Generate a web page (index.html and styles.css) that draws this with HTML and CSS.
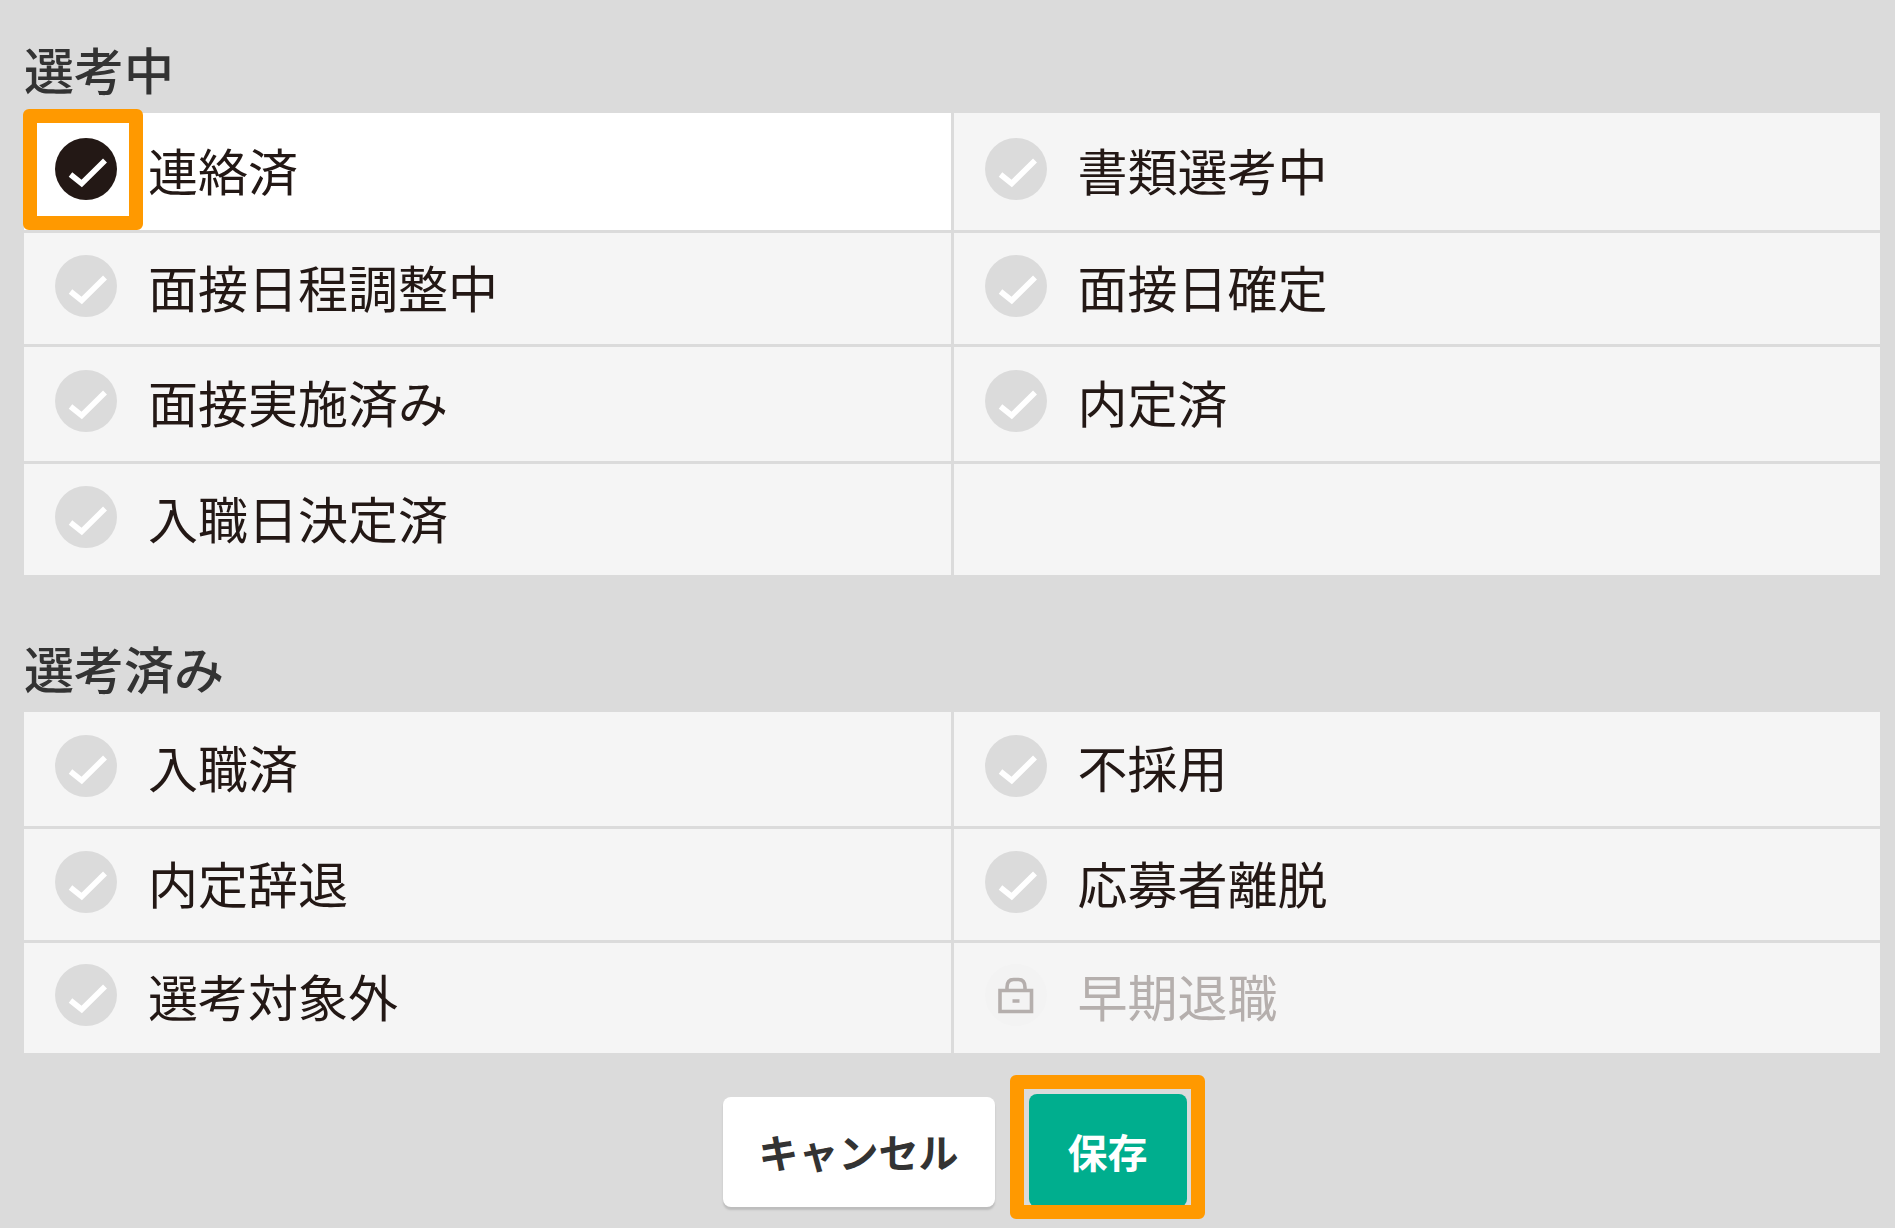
FILE: index.html
```html
<!DOCTYPE html>
<html lang="ja">
<head>
<meta charset="utf-8">
<meta name="viewport" content="width=device-width, initial-scale=1">
<title>選考ステータス</title>
<link rel="stylesheet" href="styles.css">
</head>
<body>
<svg class="sprite" aria-hidden="true">
  <symbol id="check" viewBox="0 0 62 62"><path d="M15.5 36.5 26.7 45.500 50 22.5" fill="none" stroke="currentColor" stroke-width="5.6"/></symbol>
  <symbol id="lock" viewBox="0 0 62 62"><path d="M15 26.5H46.500V47.500H15ZM22 26V23.500Q22 15.500 28.500 15.500H33.500Q40 15.500 40 23.500V26M27.500 37H34.500" fill="none" stroke="currentColor" stroke-width="3.6"/></symbol>
</svg>
<form class="status-form">
  <fieldset class="group">
    <legend class="group-title">選考中</legend>
    <div class="options options-active">
      <label class="option"><span class="mark"><input class="radio" type="radio" name="status" checked><svg class="icon"><use href="#check"/></svg><span class="focus-frame focus-frame-mark"></span></span><span class="option-text">連絡済</span></label>
      <label class="option"><span class="mark"><input class="radio" type="radio" name="status"><svg class="icon"><use href="#check"/></svg></span><span class="option-text">書類選考中</span></label>
      <label class="option"><span class="mark"><input class="radio" type="radio" name="status"><svg class="icon"><use href="#check"/></svg></span><span class="option-text">面接日程調整中</span></label>
      <label class="option"><span class="mark"><input class="radio" type="radio" name="status"><svg class="icon"><use href="#check"/></svg></span><span class="option-text">面接日確定</span></label>
      <label class="option"><span class="mark"><input class="radio" type="radio" name="status"><svg class="icon"><use href="#check"/></svg></span><span class="option-text">面接実施済み</span></label>
      <label class="option"><span class="mark"><input class="radio" type="radio" name="status"><svg class="icon"><use href="#check"/></svg></span><span class="option-text">内定済</span></label>
      <label class="option"><span class="mark"><input class="radio" type="radio" name="status"><svg class="icon"><use href="#check"/></svg></span><span class="option-text">入職日決定済</span></label>
      <div class="option"></div>
    </div>
  </fieldset>
  <fieldset class="group">
    <legend class="group-title">選考済み</legend>
    <div class="options options-done">
      <label class="option"><span class="mark"><input class="radio" type="radio" name="status"><svg class="icon"><use href="#check"/></svg></span><span class="option-text">入職済</span></label>
      <label class="option"><span class="mark"><input class="radio" type="radio" name="status"><svg class="icon"><use href="#check"/></svg></span><span class="option-text">不採用</span></label>
      <label class="option"><span class="mark"><input class="radio" type="radio" name="status"><svg class="icon"><use href="#check"/></svg></span><span class="option-text">内定辞退</span></label>
      <label class="option"><span class="mark"><input class="radio" type="radio" name="status"><svg class="icon"><use href="#check"/></svg></span><span class="option-text">応募者離脱</span></label>
      <label class="option"><span class="mark"><input class="radio" type="radio" name="status"><svg class="icon"><use href="#check"/></svg></span><span class="option-text">選考対象外</span></label>
      <label class="option option-locked"><span class="mark"><input class="radio" type="radio" name="status" disabled><svg class="icon"><use href="#lock"/></svg></span><span class="option-text">早期退職</span></label>
    </div>
  </fieldset>
  <div class="actions">
    <button class="button button-cancel" type="button">キャンセル</button>
    <div class="save-wrap"><button class="button button-save" type="submit">保存</button><span class="focus-frame focus-frame-save"></span></div>
  </div>
</form>
</body>
</html>
```
FILE: styles.css
```css
* {
  box-sizing: border-box;
}

body {
  margin: 0;
  min-height: 100vh;
  background: #dbdbdb;
  color: #231815;
  font-family: "Noto Sans CJK JP", sans-serif;
  font-size: 50px;
  line-height: 60px;
}

.sprite {
  position: absolute;
  width: 0;
  height: 0;
}

.status-form {
  padding-top: 38px;
}

.group {
  min-width: 0;
  margin: 0 15px 62px 24px;
  padding: 0;
  border: 0;
}

.group:last-of-type {
  margin-bottom: 41px;
}

.group-title {
  margin-bottom: 15px;
  padding: 0;
  color: #333;
  font-weight: 500;
}

.options {
  display: grid;
  grid-template-columns: 1fr 1fr;
  gap: 3px;
}

.options-active {
  grid-template-rows: 117px 111px 114px 111px;
}

.options-done {
  grid-template-rows: 114px 111px 110px;
}

.option {
  display: flex;
  align-items: center;
  gap: 31px;
  padding-left: 31px;
  background: #f5f5f5;
}

.option:has(.radio:checked) {
  background: #fff;
}

.option-text {
  margin-bottom: 6px;
}

.mark {
  position: relative;
  flex: none;
  width: 62px;
  height: 62px;
  margin-bottom: 6px;
  color: #fff;
}

.radio {
  display: block;
  appearance: none;
  width: 100%;
  height: 100%;
  margin: 0;
  border-radius: 50%;
  background: #dbdbdb;
}

.radio:checked {
  background: #231815;
}

.radio:disabled {
  background: #f3f3f3;
}

.icon {
  position: absolute;
  inset: 0;
  width: 100%;
  height: 100%;
  pointer-events: none;
}

.option-locked,
.option-locked .mark {
  color: #b5afad;
}

.focus-frame {
  position: absolute;
  border: 14px solid #ff9900;
  border-radius: 6px;
  pointer-events: none;
}

.focus-frame-mark {
  inset: -29px -26px -30px -32px;
}

.actions {
  display: flex;
  justify-content: center;
  align-items: flex-end;
  gap: 34px;
  padding: 0 0 21px 14px;
}

.save-wrap {
  position: relative;
}

.button {
  display: block;
  border: 0;
  border-radius: 8px;
  font-family: inherit;
  font-size: 40px;
  font-weight: 700;
  line-height: 60px;
}

.button-cancel {
  padding: 24px 36px 26px;
  background: #fff;
  color: #333;
  box-shadow: 0 3px 2px #bdbdbd;
}

.button-save {
  padding: 27px 39px 26px;
  background: #00ae8e;
  color: #fff;
}

.focus-frame-save {
  inset: -19px -18px -12px -19px;
}
```
